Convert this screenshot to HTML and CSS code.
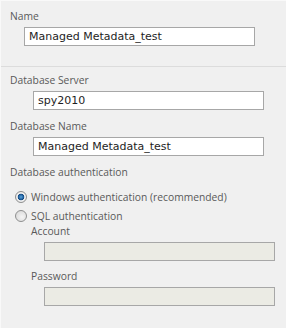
FILE: index.html
```html
<!DOCTYPE html>
<html lang="en">
<head>
  <meta charset="UTF-8" />
  <title>Database settings</title>
  <link rel="stylesheet" href="styles.css">
</head>
<body>
  <div class="panel">
    <!-- Name -->
    <div class="section name-section">
      <label class="field-label" for="svcName">Name</label>
      <input class="text-input name-input" type="text" id="svcName" value="Managed Metadata_test" />
    </div>

    <!-- Database -->
    <div class="section db-section">
      <label class="field-label" for="dbServer">Database Server</label>
      <input class="text-input db-input" type="text" id="dbServer" value="spy2010" />

      <label class="field-label" for="dbName">Database Name</label>
      <input class="text-input db-input" type="text" id="dbName" value="Managed Metadata_test" />

      <div class="field-label">Database authentication</div>
      <div class="radio-group">
        <label class="radio-row">
          <input type="radio" name="auth" checked />
          <span>Windows authentication (recommended)</span>
        </label>
        <label class="radio-row">
          <input type="radio" name="auth" />
          <span>SQL authentication</span>
        </label>
      </div>

      <div class="sql-fields">
        <label class="field-label" for="account">Account</label>
        <input class="text-input sql-input" type="text" id="account" disabled />
        <label class="field-label" for="password">Password</label>
        <input class="text-input sql-input" type="password" id="password" disabled />
      </div>
    </div>
  </div>
</body>
</html>
```

FILE: styles.css
```css
body {
  margin: 0;
  background: #f0f0f0;
  font-family: "Open Sans", Arial, sans-serif;
  font-size: 10.3px;
  color: #595959;
}

.panel {
  border-top: 1px solid #f9f9f9;
  border-left: 1px solid #f9f9f9;
  height: 327px;
}

.section {
  padding-left: 9px;
}

.name-section {
  padding-top: 7px;
  height: 58px;
}

.db-section {
  border-top: 1px solid #dcdcdc;
  padding-top: 5px;
}

.field-label {
  display: block;
  line-height: 16px;
  height: 16px;
}

.text-input {
  display: block;
  box-sizing: border-box;
  height: 19px;
  width: 231px;
  margin: 0;
  padding: 0 4px;
  border: 1px solid #a7a7a7;
  border-radius: 0;
  background: #fff;
  font-family: "DejaVu Sans", Verdana, sans-serif;
  font-size: 11px;
  color: #1e1e1e;
  outline: none;
}

.name-input {
  margin-left: 14px;
  margin-top: 3px;
}

.db-input {
  margin-left: 23px;
  margin-top: 3px;
  margin-bottom: 8px;
}

.radio-group {
  display: flex;
  flex-direction: column;
  gap: 1px;
  margin-top: 8px;
  margin-left: 4px;
}

.radio-row {
  display: flex;
  align-items: center;
  height: 18px;
}

.radio-row input {
  appearance: none;
  box-sizing: border-box;
  margin: 0 4px 0 1px;
  width: 12px;
  height: 12px;
  border: 1px solid #8e8f8f;
  border-radius: 50%;
  background: radial-gradient(circle at 60% 60%, #f4f4f4, #d4d4d4);
}

.radio-row input:checked {
  background: radial-gradient(circle, #5aa4dc 0, #1c5c9a 2.5px, #0e3c6e 3.2px, #f4f4f4 3.6px, #dadada 100%);
}

.sql-fields {
  margin-top: -2px;
  padding-left: 21px;
}

.sql-input {
  margin-left: 13px;
  margin-top: 3px;
  margin-bottom: 7px;
  background: #ebebe4;
}
```
